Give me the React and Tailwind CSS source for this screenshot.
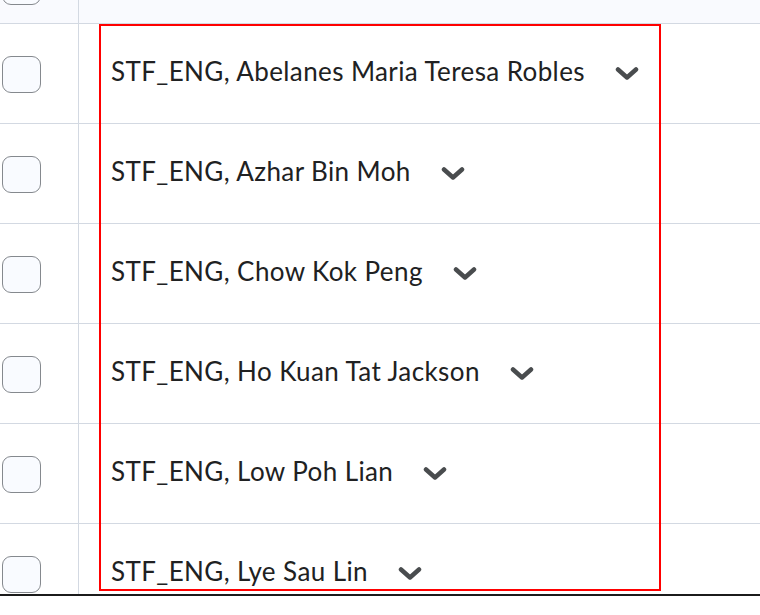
const names = [
  "STF_ENG, Abelanes Maria Teresa Robles",
  "STF_ENG, Azhar Bin Moh",
  "STF_ENG, Chow Kok Peng",
  "STF_ENG, Ho Kuan Tat Jackson",
  "STF_ENG, Low Poh Lian",
  "STF_ENG, Lye Sau Lin",
];

const Chevron = () => (
  <svg width="24" height="15" viewBox="0 0 24 15" className="shrink-0 mt-[6px]">
    <polyline
      points="3,3.5 12,11.5 21,3.5"
      fill="none"
      stroke="#494c4e"
      strokeWidth="4.5"
      strokeLinecap="round"
      strokeLinejoin="round"
    />
  </svg>
);

const Checkbox = () => (
  <div className="w-[39px] h-[37px] rounded-[9px] border border-[#85898e] bg-[#f9fbff]" />
);

export default function App() {
  return (
    <div className="relative w-[760px] h-[615px] bg-white overflow-hidden font-['Lato',sans-serif]">
      <div className="h-[596px] overflow-hidden border-b-2 border-[#1b1b1b]">
        {/* header row, mostly scrolled out */}
        <div className="flex h-[100px] -mt-[76px] bg-[#f9fafe] border-b border-[#d3d9e2]">
          <div className="w-[79px] shrink-0 border-r border-[#d3d9e2] pl-[2px] pt-[44px]">
            <Checkbox />
          </div>
          <div className="flex-1" />
        </div>

        {names.map((name) => (
          <div key={name} className="flex h-[100px] border-b border-[#d3d9e2]">
            <div className="w-[79px] shrink-0 border-r border-[#d3d9e2] pl-[2px] pt-[32px]">
              <Checkbox />
            </div>
            <div className="flex-1 flex items-center gap-[30px] pl-[32px] pb-[6px]">
              <span className="text-[26px] tracking-[0.4px] text-[#202122] leading-none">{name}</span>
              <Chevron />
            </div>
          </div>
        ))}
      </div>

      {/* annotation box */}
      <div className="absolute left-[99px] top-[24px] w-[562px] h-[567px] border-2 border-[#ff0000] pointer-events-none" />
    </div>
  );
}
